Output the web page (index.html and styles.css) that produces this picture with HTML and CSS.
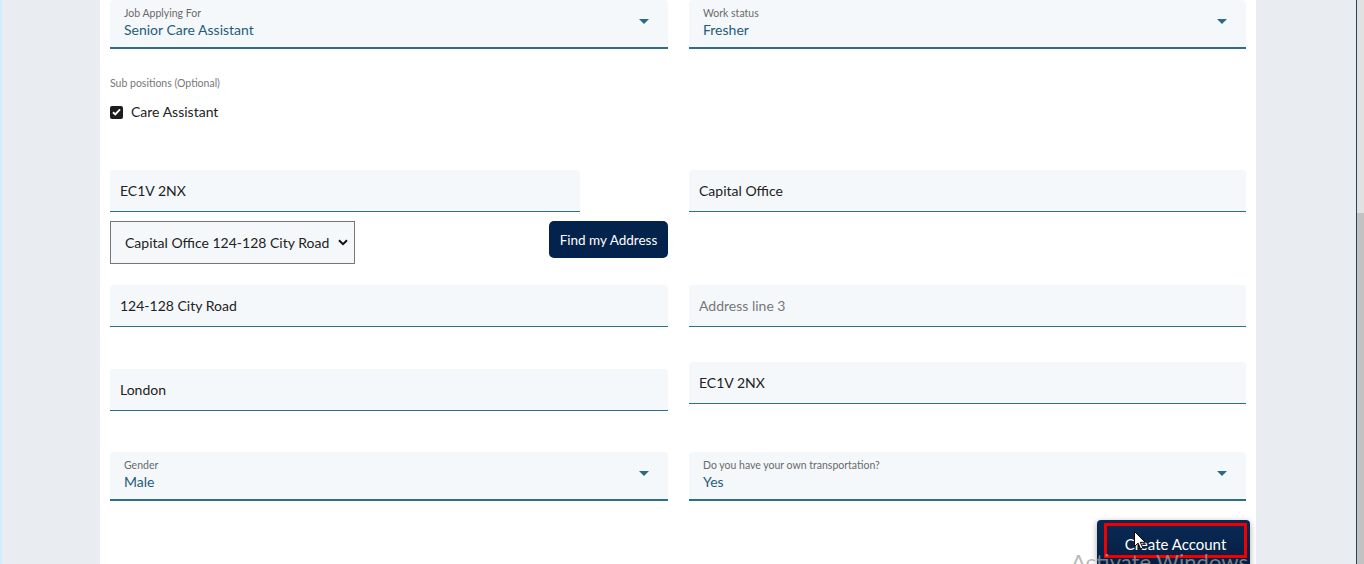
FILE: index.html
```html
<!DOCTYPE html>
<html lang="en">
<head>
<meta charset="utf-8">
<title>Create Account</title>
<link rel="stylesheet" href="styles.css">
</head>
<body>
<div class="screen">
  <div class="desk">
    <form class="card">
      <div class="row row-a">
        <div class="msel">
          <div class="msel-text">
            <span class="msel-label">Job Applying For</span>
            <span class="msel-value">Senior Care Assistant</span>
          </div>
          <svg class="tri" width="10" height="5" viewBox="0 0 10 5"><path d="M0 0h10L5 5z"/></svg>
        </div>
        <div class="msel">
          <div class="msel-text">
            <span class="msel-label">Work status</span>
            <span class="msel-value">Fresher</span>
          </div>
          <svg class="tri" width="10" height="5" viewBox="0 0 10 5"><path d="M0 0h10L5 5z"/></svg>
        </div>
      </div>

      <div class="sub">
        <div class="sub-label">Sub positions (Optional)</div>
        <label class="check">
          <span class="box"><svg width="9" height="8" viewBox="0 0 9 8"><path d="M1 4.2l2.3 2.2L8 1.4" fill="none" stroke="#fff" stroke-width="1.9"/></svg></span>
          <span>Care Assistant</span>
        </label>
      </div>

      <div class="row row-c">
        <div class="col">
          <div class="inp inp-short">EC1V 2NX</div>
          <div class="find-row">
            <div class="nsel">
              <span>Capital Office 124-128 City Road</span>
              <svg width="10" height="7" viewBox="0 0 10 7"><path d="M1 1.2l4 4 4-4" fill="none" stroke="#111" stroke-width="2"/></svg>
            </div>
            <button type="button" class="find-btn">Find my Address</button>
          </div>
        </div>
        <div class="col">
          <div class="inp">Capital Office</div>
        </div>
      </div>

      <div class="row row-d">
        <div class="inp">124-128 City Road</div>
        <div class="inp placeholder">Address line 3</div>
      </div>

      <div class="row row-e">
        <div class="inp inp-e-left">London</div>
        <div class="inp inp-e-right">EC1V 2NX</div>
      </div>

      <div class="row row-f">
        <div class="msel">
          <div class="msel-text">
            <span class="msel-label">Gender</span>
            <span class="msel-value">Male</span>
          </div>
          <svg class="tri" width="10" height="5" viewBox="0 0 10 5"><path d="M0 0h10L5 5z"/></svg>
        </div>
        <div class="msel">
          <div class="msel-text">
            <span class="msel-label">Do you have your own transportation?</span>
            <span class="msel-value">Yes</span>
          </div>
          <svg class="tri" width="10" height="5" viewBox="0 0 10 5"><path d="M0 0h10L5 5z"/></svg>
        </div>
      </div>

      <div class="submit-row">
        <button type="button" class="create-btn"><span class="focus-ring">Create Account</span></button>
      </div>
    </form>
  </div>
  <div class="scrollbar"><div class="thumb"></div></div>

  <div class="watermark">Activate Windows</div>
  <svg class="cursor" width="12" height="19" viewBox="0 0 12 19"><path d="M0.5 0.5v15l3.6-3.4 2.5 5.8 2.2-1-2.5-5.6h5z" fill="#fff" stroke="#000" stroke-width="1"/></svg>
</div>
</body>
</html>
```

FILE: styles.css
```css
* { box-sizing: border-box; }

html, body {
  margin: 0;
  padding: 0;
  height: 100%;
  overflow: hidden;
}

body {
  font-family: Lato, "Open Sans", "Liberation Sans", sans-serif;
  font-size: 14px;
  color: #222;
}

.screen {
  position: relative;
  display: flex;
  width: 1364px;
  height: 564px;
  overflow: hidden;
}

.desk {
  flex: 1;
  background: #e9edf2;
  border-left: 2px solid #cdeefb;
  padding-left: 98px;
  height: 100%;
}

.card {
  width: 1156px;
  min-height: 100%;
  background: #fff;
  padding: 0 10px;
  margin: 0;
}

.row {
  display: grid;
  grid-template-columns: 558px 557px;
  column-gap: 21px;
  align-items: start;
}

/* material-style filled select */
.msel {
  height: 49px;
  background: #f4f8fb;
  border-bottom: 2px solid #2f6e84;
  border-radius: 4px 4px 0 0;
  display: flex;
  align-items: center;
  justify-content: space-between;
  padding: 0 19px 0 14px;
}

.msel-text {
  display: flex;
  flex-direction: column;
  padding-bottom: 1px;
}

.msel-label {
  font-size: 10.5px;
  color: #6a6a6a;
  line-height: 14px;
}

.msel-value {
  font-size: 14px;
  color: #1f5d78;
  line-height: 20px;
}

.tri { fill: #2c6a85; margin-top: -4px; }

/* sub positions */
.sub { padding-top: 27px; }

.sub-label {
  font-size: 10.5px;
  color: #777;
  line-height: 14px;
}

.check {
  display: flex;
  align-items: center;
  gap: 8px;
  margin-top: 15px;
  line-height: 14px;
  font-size: 14px;
  color: #222;
}

.box {
  width: 13px;
  height: 13px;
  background: #1d1d1d;
  border-radius: 2px;
  display: flex;
  align-items: center;
  justify-content: center;
}

/* text inputs */
.inp {
  height: 42px;
  background: #f4f8fb;
  border-bottom: 1.5px solid #2f6e84;
  border-radius: 3px 3px 0 0;
  padding: 0 10px;
  display: flex;
  align-items: center;
  font-size: 14px;
  color: #222;
}

.placeholder { color: #777; }

.row-c { margin-top: 51px; }

.inp-short { width: 470px; }

.find-row {
  display: flex;
  justify-content: space-between;
  align-items: flex-start;
  margin-top: 9px;
}

.nsel {
  width: 245px;
  height: 43px;
  border: 1px solid #767676;
  background: #f4f8fb;
  display: flex;
  align-items: center;
  justify-content: space-between;
  padding: 0 6px 0 14px;
  font-size: 14px;
  color: #222;
}

.find-btn {
  width: 119px;
  height: 37px;
  background: #03224c;
  color: #fff;
  border: none;
  border-radius: 5px;
  font-family: inherit;
  font-size: 13.5px;
  padding: 0;
}

.row-d { margin-top: 21px; }

.inp-e-left { margin-top: 42px; }
.inp-e-right { margin-top: 35px; }

.row-f { margin-top: 41px; }

.submit-row {
  display: flex;
  justify-content: flex-end;
  margin-top: 19px;
  margin-right: -4px;
}

.create-btn {
  width: 153px;
  height: 50px;
  background: linear-gradient(#0a2a55, #041d40);
  border: none;
  border-radius: 4px;
  box-shadow: 0 2px 6px rgba(0, 0, 0, 0.35);
  padding: 3px 3px 0 7px;
  display: flex;
  align-items: flex-start;
  font-family: inherit;
}

.focus-ring {
  display: flex;
  align-items: center;
  justify-content: center;
  width: 100%;
  height: 35px;
  border: 3px solid #f20000;
  color: #fff;
  font-size: 15px;
  padding-top: 7px;
}

.scrollbar {
  width: 8px;
  height: 100%;
  border-left: 1px solid #1b4a5f;
  background: #e1e1e1;
  padding-top: 213px;
}

.thumb {
  height: 351px;
  background: #c2c2c2;
}

.watermark {
  position: absolute;
  left: 1071px;
  top: 548px;
  font-size: 22px;
  color: rgba(160, 160, 160, 0.75);
  white-space: nowrap;
}

.cursor {
  position: absolute;
  left: 1134px;
  top: 531px;
}
```
